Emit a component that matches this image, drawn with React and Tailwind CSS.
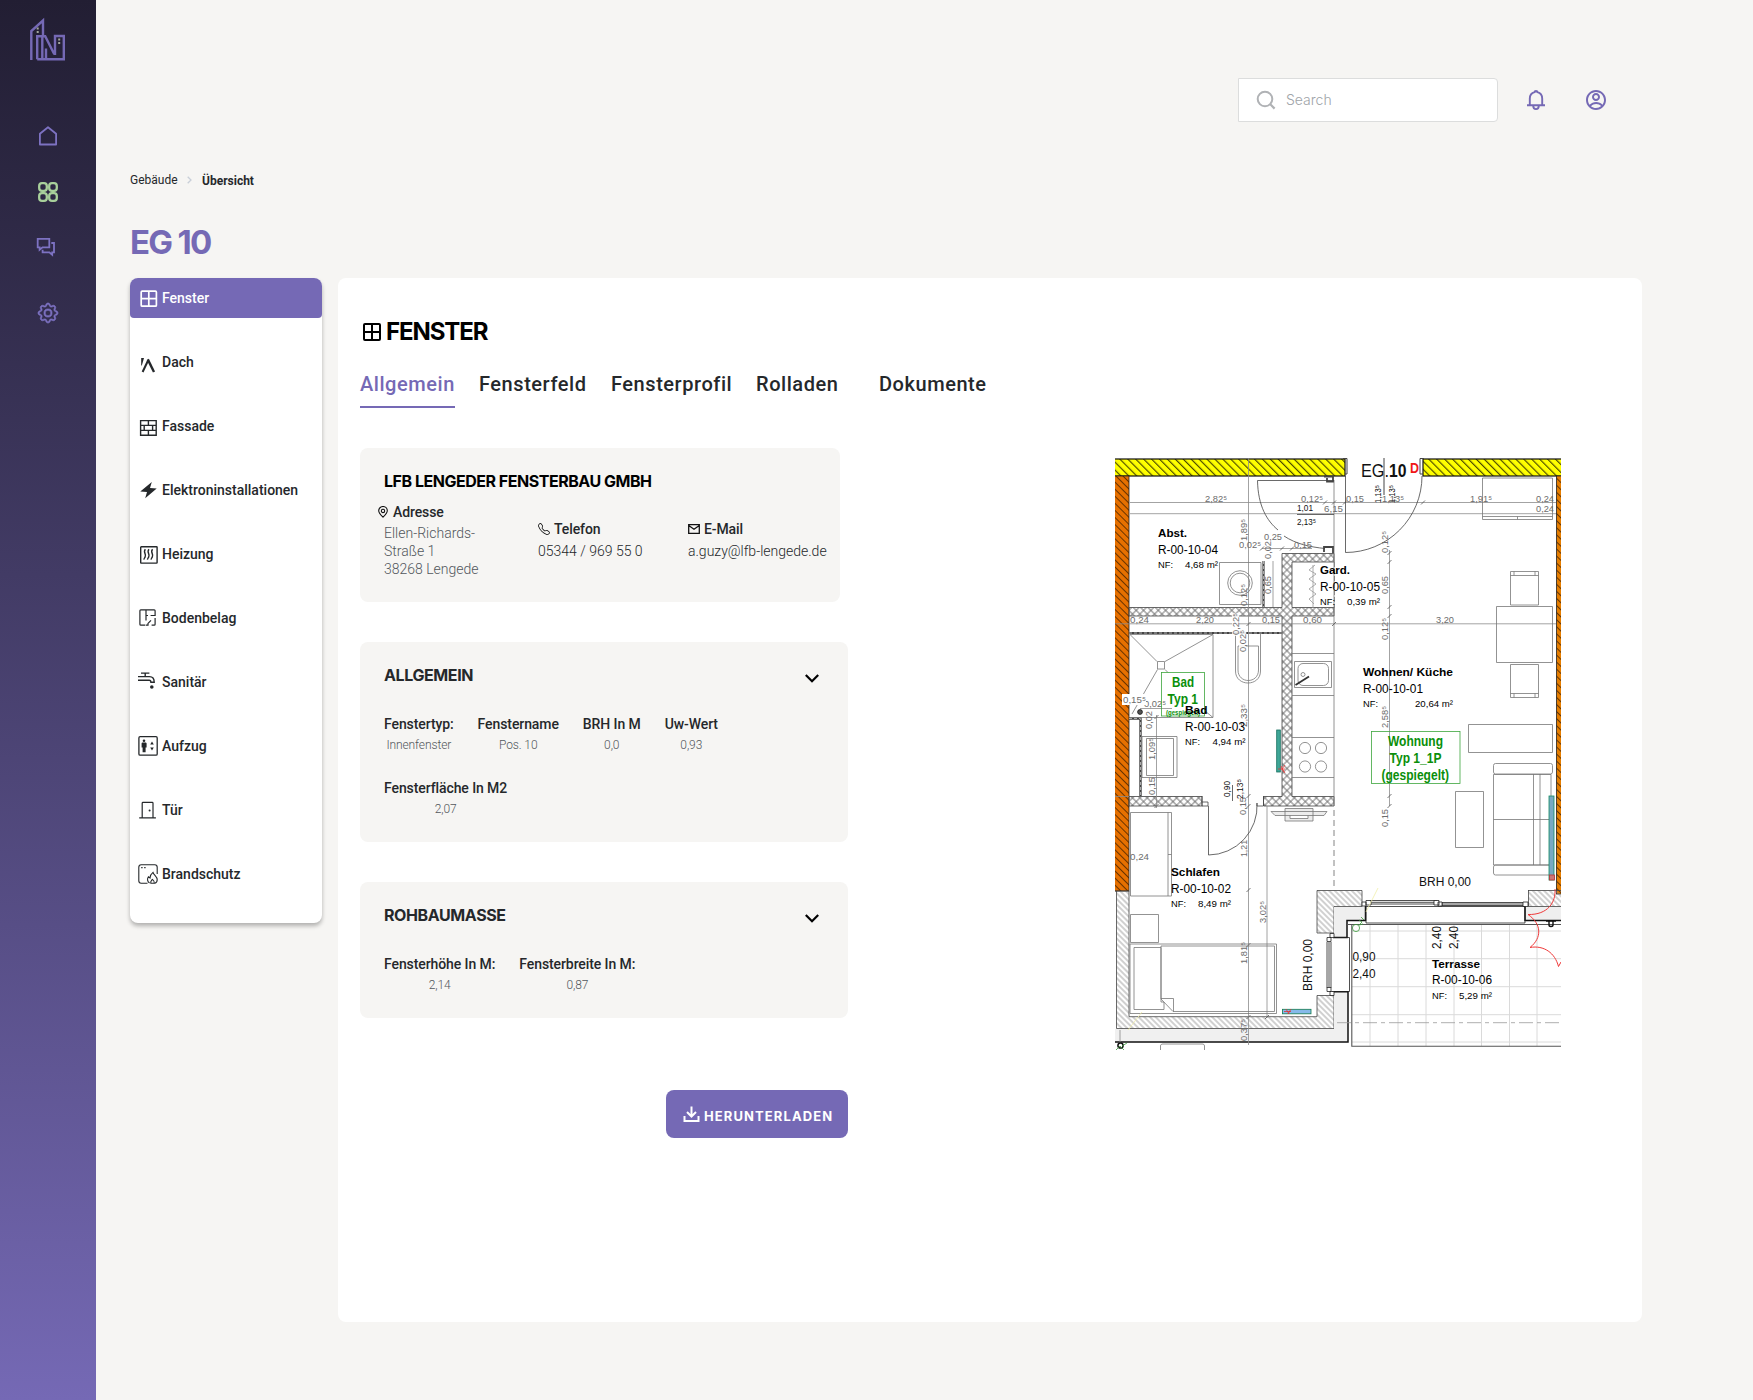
import React from "react";
import { BsGear, BsTelephone } from "react-icons/bs";
import { RiAccountCircleLine } from "react-icons/ri";

/* ---------- icons ---------- */

const Logo = () => (
  <svg width="40" height="46" viewBox="28 17 40 46" fill="none" stroke="#7569b5" strokeWidth="2.4">
    <path d="M31.3 60V31L43 20.5V36" />
    <path d="M37.2 59.2V36.2H45.2L54.3 54.2M42.3 36.2V59.2M55 55V36H63.8V59.2H37.2M46 48.5V59" />
    <path d="M37.7 27.5v2M37.7 31v2M59.2 38.5v2M59.2 42v2" stroke="#a3a89c" strokeWidth="2" />
  </svg>
);

const HomeIcon = () => (
  <svg width="24" height="24" viewBox="0 0 24 24" fill="none" stroke="#7d72c2" strokeWidth="1.8">
    <path d="M3.9 20.5V9.7L12 3.3L20.1 9.7V20.5Z" strokeLinejoin="round" />
  </svg>
);

const GridIcon = () => (
  <svg width="24" height="24" viewBox="0 0 24 24" fill="none" stroke="#a8d09b" strokeWidth="2.3">
    {[3.2, 13.2].map((x) =>
      [3.2, 13.2].map((y) => <rect key={x + "-" + y} x={x} y={y} width="7.6" height="7.6" rx="2.8" />)
    )}
  </svg>
);

const ChatIcon = () => (
  <svg width="24" height="24" viewBox="0 0 24 24" fill="none" stroke="#7d72c2" strokeWidth="1.8">
    <path d="M3.7 3.8H15.3V12.3H8.5L5.6 14.8V12.3H3.7Z" />
    <path d="M17.3 8H20V17.3H18.2V19.8L15.4 17.3H8.6V14.8" />
  </svg>
);

const BellIcon = () => (
  <svg width="20" height="22" viewBox="0 0 20 22" fill="none" stroke="#7569b5" strokeWidth="1.9">
    <path d="M1 16.3H19M3.8 16.3V9.5C3.8 6.3 5.8 4 8.6 3.2C8.6 1.6 11.4 1.6 11.4 3.2C14.2 4 16.2 6.3 16.2 9.5V16.3" />
    <path d="M7.2 16.5C7.2 21.3 12.8 21.3 12.8 16.5" />
  </svg>
);

const SearchIcon = () => (
  <svg width="20" height="20" viewBox="0 0 20 20" fill="none" stroke="#b0b2b5" strokeWidth="2">
    <circle cx="9" cy="9" r="7.3" />
    <path d="M14 14L18.6 18.6" strokeWidth="2.2" />
  </svg>
);

const MenuSvg = ({ children, w = 1.3 }) => (
  <svg width="24" height="24" viewBox="0 0 24 24" fill="none" stroke="currentColor" strokeWidth={w} className="shrink-0">
    {children}
  </svg>
);

const FensterIcon = () => (
  <MenuSvg w={1.7}>
    <rect x="5.2" y="5.2" width="15.2" height="15" rx="1" />
    <path d="M12.8 5V20M5 12.7H20.5" />
  </MenuSvg>
);

const DachIcon = () => (
  <MenuSvg>
    <path d="M5.2 8H8L5.8 15.5H5.2Z" fill="currentColor" stroke="none" />
    <path d="M6.6 22L12.3 10" strokeWidth="2" />
    <path d="M11.8 9.4L18 22" strokeWidth="2.4" />
  </MenuSvg>
);

const FassadeIcon = () => (
  <MenuSvg w={1.4}>
    <path d="M4.6 6.6H20.2V21.2H4.6ZM4.6 11.4H20.2M4.6 16.4H20.2M12.4 6.6V11.4M12.4 16.4V21.2M8.2 11.4V16.4M16.6 11.4V16.4" />
  </MenuSvg>
);

const ElektroIcon = () => (
  <MenuSvg>
    <path d="M15.8 4L4.3 13.6L11 14L9.2 20.3L20.7 10.5L14 10Z" fill="currentColor" stroke="none" />
  </MenuSvg>
);

const HeizungIcon = () => (
  <MenuSvg w={1.4}>
    <rect x="4.7" y="4.7" width="16.4" height="16.4" rx="0.6" />
    <path d="M9.4 7.2C6.6 10 10.6 12 9.2 14.6C8.6 16 8.2 16.4 7.8 17.6M13 7.2C10.2 10 14.2 12 12.8 14.6C12.2 16 11.8 16.4 11.4 17.6M16.6 7.2C13.8 10 17.8 12 16.4 14.6C15.8 16 15.4 16.4 15 17.6" />
  </MenuSvg>
);

const BodenIcon = () => (
  <MenuSvg w={1.2}>
    <path d="M9 19.2H4.8C4.2 19.2 3.9 18.9 3.9 18.3V4.8C3.9 4.2 4.2 3.9 4.8 3.9H18.2C18.8 3.9 19.1 4.2 19.1 4.8V9.5H14.6M10 4V14.5M10 9.5H12M19.1 12V18.3C19.1 18.9 18.8 19.2 18.2 19.2H15.6M9.6 19.2H12V17.4L15 14.4" />
  </MenuSvg>
);

const SanitaerIcon = () => (
  <MenuSvg w={1.4}>
    <path d="M5 3.1H13.4M9.2 3V6.4M2 6.6H13.5C16.6 6.6 18.2 8.6 18.2 12.2H14.9C14.9 10.8 14.3 10.2 13.2 10.2H2" />
    <circle cx="15.8" cy="17" r="1.8" fill="currentColor" stroke="none" />
  </MenuSvg>
);

const AufzugIcon = () => (
  <MenuSvg>
    <rect x="2.9" y="2.7" width="18.3" height="18.4" rx="1.2" />
    <g fill="currentColor" stroke="none">
      <circle cx="8" cy="6.8" r="1.3" />
      <path d="M5.6 9.4C5.6 8.7 6.2 8.5 6.8 8.5H9.2C9.9 8.5 10.6 8.7 10.6 9.4V13.4H9.6V18.2H6.6V13.4H5.6Z" />
      <path d="M14.2 10.4L16 7.4L17.8 10.4ZM14.2 13.6L16 16.6L17.8 13.6Z" />
    </g>
  </MenuSvg>
);

const TuerIcon = () => (
  <MenuSvg w={1.2}>
    <path d="M3.2 19.9H19.9M6.2 19.9V5.2C6.2 4.7 6.5 4.4 7 4.4H16.2C16.7 4.4 17 4.7 17 5.2V19.9" />
    <circle cx="13.6" cy="12.4" r="1" fill="currentColor" stroke="none" />
  </MenuSvg>
);

const BrandIcon = () => (
  <MenuSvg w={1.1}>
    <path d="M11.5 21.2H5.2C3.8 21.2 2.8 20.2 2.8 18.8V5.2C2.8 3.8 3.8 2.8 5.2 2.8H18.8C20.2 2.8 21.2 3.8 21.2 5.2V12" />
    <path d="M5.2 5.6h1.4M8.2 5.6h1.4" strokeWidth="1.3" />
    <path d="M13.6 21C11.2 19.6 11 16.8 12.4 14.8L14 16C14.2 13.6 15.4 11.6 17 10.4C17.6 13 21.4 14.6 21.2 17.8C21.2 19.4 20.2 20.8 18.8 21.3H14.8C14.2 19.4 15.4 18.6 16.4 17.4C17.6 18.4 19 19.4 18.2 21.2" />
  </MenuSvg>
);

const Chevron = () => (
  <svg width="16" height="12" viewBox="0 0 16 12" fill="none" stroke="#000" strokeWidth="2.2">
    <path d="M1.8 2L8 8.3L14.2 2" />
  </svg>
);

/* ---------- floor plan ---------- */

const DIM = "#6c6c6c";

const Label = ({ x, y, w, s = 9.5, c = DIM, b, r, children }) => (
  <text
    x={x}
    y={y}
    fontSize={s}
    fill={c}
    stroke="none"
    fontWeight={b ? 700 : 400}
    textLength={w}
    lengthAdjust="spacingAndGlyphs"
    transform={r ? `rotate(-90 ${x} ${y})` : undefined}
  >
    {children}
  </text>
);

const Room = ({ x, y, name, nameW, code, area, areaX, areaW }) => (
  <g>
    <Label x={x} y={y} w={nameW} s={11.6} c="#000" b>{name}</Label>
    <Label x={x} y={y + 16.8} w={60} s={12} c="#000">{code}</Label>
    <Label x={x} y={y + 31} w={15} s={9.4} c="#000">NF:</Label>
    <Label x={areaX} y={y + 31} w={areaW} s={9.4} c="#000">{area}</Label>
  </g>
);

const horizontalDims = [
  [1205, 501.5, 22, "2,82⁵"], [1301, 501.5, 22, "0,12⁵"], [1324, 512, 19, "6,15"], [1264, 539.5, 18, "0,25"],
  [1239, 548, 22, "0,02⁵"], [1294, 548, 18, "0,15"], [1130, 623, 19, "0,24"], [1196, 623, 18, "2,20"],
  [1262, 623, 18, "0,15"], [1303, 623, 19, "0,60"], [1346, 501.5, 18, "0,15"], [1382, 501.5, 22, "1,13⁵"],
  [1470, 501.5, 22, "1,91⁵"], [1536, 501.5, 18, "0,24"], [1536, 512, 18, "0,24"], [1436, 623, 18, "3,20"],
  [1144, 707, 22, "0,02⁵"], [1130, 859.5, 19, "0,24"],
];

const verticalDims = [
  [1247, 541, 22, "1,89⁵"], [1271, 559, 18, "0,02"], [1271, 594, 18, "0,65"], [1247, 606, 22, "0,12⁵"],
  [1239, 635, 22, "0,22⁵"], [1246, 652, 22, "0,02⁵"], [1388, 553, 22, "0,12⁵"], [1388, 594, 18, "0,65"],
  [1388, 640, 22, "0,12⁵"], [1388, 728, 22, "2,58⁵"], [1388, 827, 18, "0,15"], [1247, 727, 23, "2,33⁵"],
  [1152, 729, 18, "0,02"], [1155, 760, 22, "1,09⁵"], [1155, 795, 18, "0,15"], [1246, 815, 18, "0,15"],
  [1247, 857, 17, "1,21"], [1266, 923, 22, "3,02⁵"], [1247, 964, 22, "1,81⁵"], [1247, 1041, 22, "0,37⁵"],
];

const ticks = [
  [1248.5, 624], [1389.5, 553], [1389.5, 562], [1389.5, 607], [1389.5, 616], [1389.5, 796], [1389.5, 806],
  [1423, 502.5], [1345, 502.5], [1334, 624], [1248.5, 890], [1248.5, 945], [1248.5, 1017], [1248.5, 796],
  [1248.5, 806], [1156.5, 717], [1156.5, 806], [1282, 548.5], [1292, 548.5], [1262, 548.5], [1334, 502.5], [1267, 1017], [1325, 502.5],
];

const FloorPlan = () => (
  <svg width="446" height="592" viewBox="1115 458 446 592" fill="none" stroke="#777" strokeWidth="0.8" fontFamily="'Liberation Sans', Arial, sans-serif">
    <defs>
      <pattern id="hatch" width="5.6" height="5.6" patternUnits="userSpaceOnUse" patternTransform="rotate(-45)">
        <path d="M2.5 0V5.6" stroke="#2b2a00" strokeWidth="1" />
      </pattern>
      <pattern id="hatchOrange" width="5" height="5" patternUnits="userSpaceOnUse" patternTransform="rotate(-45)">
        <path d="M2.5 0V5" stroke="#5a2c00" strokeWidth="0.9" />
      </pattern>
      <pattern id="hatchGray" width="4" height="4" patternUnits="userSpaceOnUse" patternTransform="rotate(-45)">
        <path d="M2 0V4" stroke="#8a8a8a" strokeWidth="0.8" />
      </pattern>
      <pattern id="cross" width="5.2" height="5.2" patternUnits="userSpaceOnUse" patternTransform="rotate(-45)">
        <path d="M2.6 0V5.2M0 2.6H5.2" stroke="#6a6a6a" strokeWidth="0.9" />
      </pattern>
    </defs>

    {/* outer walls */}
    <g fill="#ffff00" stroke="none">
      <rect x="1115" y="459" width="230" height="17" />
      <rect x="1423" y="459" width="138" height="17" />
    </g>
    <g fill="url(#hatch)" stroke="#111" strokeWidth="1.2">
      <rect x="1113" y="459" width="232" height="17" />
      <rect x="1423" y="459" width="140" height="17" />
    </g>
    <rect x="1115" y="476" width="14" height="415" fill="#e67000" stroke="none" />
    <rect x="1113" y="476" width="16" height="415" fill="url(#hatchOrange)" stroke="#222" />
    <rect x="1556.5" y="476" width="5" height="418" fill="#e67e00" stroke="none" />
    <rect x="1556.5" y="476" width="7" height="418" fill="url(#hatchOrange)" stroke="#222" />
    <path d="M1115 891H1129V1016.7H1317V995.5H1334V1028.5H1116.5V891" fill="url(#hatchGray)" stroke="#444" />
    <path d="M1115 1029H1334V992H1348V1042H1115Z" fill="#f0f0f0" stroke="none" />
    <path d="M1317 890.5H1362V906.5H1334V933H1317Z" fill="url(#hatchGray)" stroke="#444" />
    <path d="M1334 907H1365V920H1347V937H1334Z" fill="#efefef" stroke="none" />
    <rect x="1528.5" y="890.5" width="34" height="16" fill="url(#hatchGray)" stroke="#444" />
    <rect x="1525" y="907" width="36" height="13" fill="#efefef" stroke="none" />
    <path d="M1365.5 906V920.5H1347V937.5H1333M1332 991.7H1348V1042H1115M1525 906V920.5H1561" stroke="#111" strokeWidth="1.5" />

    {/* inner walls */}
    <g fill="url(#cross)" stroke="#444">
      <path d="M1282 553.5H1334V562H1292V607.5H1334V616H1292V796.5H1334V806H1263.5V796.5H1282V616H1129V607.5H1282Z" />
      <rect x="1129" y="796.5" width="73" height="9.5" />
    </g>
    <path d="M1129 633H1282" stroke="#444" strokeWidth="2.2" />
    <path d="M1129 633H1282" stroke="#aaa" strokeWidth="1" strokeDasharray="3 2" />
    <path d="M1263.5 561V607" stroke="#444" strokeWidth="2.2" />
    <path d="M1263.5 561V607" stroke="#aaa" strokeWidth="1" strokeDasharray="3 2" />
    <path d="M1129 718.5H1140.5V796" stroke="#444" strokeWidth="2.4" />
    <path d="M1129 718.5H1140.5V796" stroke="#aaa" strokeWidth="1" strokeDasharray="3 2" />
    <path d="M1334 480V616M1334 616V806" />
    <path d="M1334 810V890" strokeDasharray="6 4" stroke="#666" />

    {/* dimension lines */}
    <path d="M1130 502.5H1556M1130 513.7H1556M1115 623.8H1556M1248.5 458V1045M1262 548.5H1312M1389.5 550V796M1389.5 796V806M1156.5 715V808M1267 806V1018M1273 561V607M1140 708.5H1172M1115 796.5H1129" stroke="#8b8b8b" />
    {ticks.map(([x, y], i) => (
      <path key={i} d={`M${x - 2} ${y + 2}L${x + 2} ${y - 2}`} stroke="#555" />
    ))}

    {/* doors */}
    <g stroke="#444">
      <path d="M1334 480.5H1257.5C1258 506 1267 521 1278 530M1284 536C1296 544 1310 547 1325 548.5" />
      <path d="M1324 476.5H1333V481.5H1327V478M1324 552V547H1333V553" strokeWidth="1.8" />
      <path d="M1345.5 476V552.5A76.5 76.5 0 0 0 1422 476" />
      <path d="M1343 458.5H1347V474H1345M1424 458.5H1420V474H1423M1384 458V495" strokeWidth="1" />
      <path d="M1208.5 806V855A49 49 0 0 0 1257 803M1202 796V806H1208V802H1202M1263.5 796V806M1257 803V806H1263" />
      <path d="M1297 514.5H1334M1232.5 785V801" />
    </g>

    {/* Abstellraum and bath fixtures */}
    <path d="M1219.5 562.5H1261V604.5H1219.5Z" />
    <circle cx="1240" cy="583" r="12.3" />
    <circle cx="1240" cy="583" r="9.8" />
    <path d="M1130 634.5H1213V717.5H1130M1130 634.5L1157 661.5M1213 634.5L1165 661.5M1157.5 669.5L1132 714M1165 669.5L1168 672.5M1157.5 661.5H1164.5V669H1157.5ZM1213 717.5L1205 711" />
    <path d="M1235.5 634V671C1235.5 687 1260.5 687 1260.5 671V634M1238 646H1258.5V670C1258.5 684 1238 684 1238 670Z" />
    <path d="M1142 736.5H1177V777.5H1142ZM1146.5 738.5H1173.5V775.5H1146.5Z" />
    <path d="M1315 565l-6 5 7 4-7 5 7 5-7 5 7 5-7 5 5 5M1313 565V608" stroke="#999" />
    <path d="M1334.5 562V608" strokeDasharray="5 2" />
    <circle cx="1140" cy="712" r="2.4" fill="#555" stroke="#111" />

    {/* kitchen */}
    <path d="M1292 653.5H1334M1292 695.5H1334M1292 737.5H1334M1292 777.5H1334M1294.5 661.5H1331.5V687.5H1294.5Z" />
    <rect x="1298" y="663.5" width="30.5" height="22" rx="5" />
    <circle cx="1303" cy="674.5" r="2" />
    <path d="M1295.5 685L1309 676.5" stroke="#333" strokeWidth="1.8" />
    {[[1305, 748], [1321, 748], [1305, 766.5], [1321, 766.5]].map(([x, y]) => (
      <circle key={x + "-" + y} cx={x} cy={y} r="5.6" />
    ))}
    <path d="M1271 811.5H1327L1324 815.5H1275ZM1285 808.5H1313V821H1285ZM1290 815.5V818.5H1308V815.5" fill="#ececec" />

    {/* living room furniture */}
    <path d="M1482.5 478H1552.5V519.5H1482.5ZM1482.5 516.5H1552.5M1517.5 516.5V519.5" />
    <path d="M1510.5 571.5H1538.5V605H1510.5ZM1510.5 575.5H1538.5M1514 571.5V575.5M1535 571.5V575.5" />
    <path d="M1496.5 606.5H1552.5V662.5H1496.5ZM1510.5 664.5H1538.5V697.5H1510.5ZM1510.5 693.5H1538.5M1514 693.5V697.5M1535 693.5V697.5" />
    <path d="M1468.5 724.5H1552.5V752.5H1468.5ZM1455.5 791.5H1483.5V847.5H1455.5Z" />
    <rect x="1493.5" y="763.5" width="59" height="10.5" rx="2" />
    <path d="M1493.5 774.5H1551V865H1493.5ZM1493.5 819.5H1551M1533.5 774V865M1540 774V865" />
    <rect x="1493.5" y="865" width="59" height="10" rx="2" />
    <rect x="1549" y="796" width="5" height="84" fill="#78a9c4" stroke="#138a61" />
    <rect x="1549.5" y="875" width="5" height="5" fill="#c77" stroke="#b33" />

    {/* bedroom furniture */}
    <path d="M1130.5 812.5H1171.5V896H1130.5ZM1168 812.5V896M1168 854.5H1171.5M1130.5 914.5H1158.5V942.5H1130.5Z" />
    <path d="M1130 944H1276.5V1013.5H1130ZM1134 947.5H1161V1002H1164V1009.5H1134ZM1161 946H1274.5V1011.5H1173L1161 999ZM1161 998.5H1173.5V1011.5" />

    {/* radiators */}
    <rect x="1276.7" y="730" width="3.6" height="42" fill="#3fa697" stroke="#14705f" />
    <path d="M1278 769h7M1281 766l3 6M1285 765l-3 4 3 4" stroke="#e33" />
    <rect x="1282.5" y="1009.3" width="28.5" height="4.5" fill="#86b9ea" stroke="#117a4c" />
    <path d="M1284 1011.5h7M1286 1009l3 5M1291 1009l-3 5" stroke="#d33" />

    {/* windows */}
    <g stroke="#222">
      <path d="M1327 942V988M1329 942V988M1331 942V988" />
      <path d="M1327 937.5h4v4h-4zM1327 987.5h4v4h-4zM1330 933.5h4v4h-4zM1330 991.5h4v4h-4z" fill="#fff" />
      <path d="M1334 937.5H1349.5V991.5H1334" />
      <path d="M1370 900.5H1437V904H1370ZM1370 902.3H1437M1442 902.5H1524V905.5H1442ZM1442 904H1524" />
      <path d="M1366 900.5h5v4.5h-5zM1434 900.5h5v4.5h-5zM1362 902h4v4h-4zM1438 902h4v4h-4zM1523 902h5v4.5h-5z" fill="#fff" />
      <path d="M1366 906.5H1525V923H1366Z" />
    </g>

    {/* terrace */}
    <path d="M1370 925V1046M1398 925V1046M1426 925V1046M1454 925V1046M1481.5 925V1046M1509.5 925V1046M1537 925V1046M1352 931H1561M1352 958.7H1561M1352 986.7H1561M1352 1014.7H1561M1352 1042H1561" stroke="#dadada" strokeWidth="1" />
    <path d="M1337 1022.7H1561" stroke="#999" strokeDasharray="14 4 4 4" />
    <path d="M1351.8 924.5V1046.3H1561M1347 924.5H1561" stroke="#555" strokeWidth="1.1" />
    <path d="M1546 921H1556M1549 921V925C1549 927 1553 927 1553 925V921" stroke="#111" strokeWidth="1.4" />
    <path d="M1555 889C1556 902 1548 915 1528 914.5C1542 924 1542 938 1530 947.5C1544 945 1555 953 1558.5 966.5L1561 962" stroke="#ef3a3a" strokeWidth="1" />
    <path d="M1359 920l3 2-3 3 4-1M1361 917l3 3" stroke="#3c9c3c" />
    <circle cx="1356" cy="928" r="3.6" stroke="#3c9c3c" />
    <path d="M1366 912L1378 888M1128 1030L1142 1012" stroke="#f0eeaa" />
    <path d="M1120 1030V1043" stroke="#888" />
    <circle cx="1120.5" cy="1045.5" r="2.6" stroke="#111" strokeWidth="1.5" />
    <path d="M1116 1050l4-4 4 4M1122 1046l5-3" stroke="#3c9c3c" />
    <path d="M1160.5 1050V1046C1160.5 1044.5 1161.5 1044 1163 1044H1202C1203.5 1044 1204.5 1044.5 1204.5 1046V1050" />

    {/* dimension labels */}
    {horizontalDims.map(([x, y, w, t], i) => (
      <Label key={i} x={x} y={y} w={w}>{t}</Label>
    ))}
    <path d="M1242.5 629V653M1235.5 613V636" stroke="#fff" strokeWidth="7" opacity="0.85" />
    {verticalDims.map(([x, y, w, t], i) => (
      <Label key={i} x={x} y={y} w={w} r>{t}</Label>
    ))}
    <rect x="1122" y="694" width="24" height="11" fill="#fff" stroke="none" />
    <Label x={1123} y={703} w={23}>0,15⁵</Label>

    <g>
      <Label x={1297} y={511.3} w={16} c="#111">1,01</Label>
      <Label x={1297} y={525} w={19} c="#111">2,13⁵</Label>
      <Label x={1381} y={503} w={18} c="#111" r>1,13⁵</Label>
      <Label x={1395} y={503} w={18} c="#111" r>1,13⁵</Label>
      <Label x={1230} y={797} w={16} c="#111" r>0,90</Label>
      <Label x={1243} y={799} w={20} c="#111" r>2,13⁵</Label>
    </g>

    {/* unit title */}
    <Label x={1361} y={477} w={28} s={19} c="#111">EG.</Label>
    <Label x={1389} y={477} w={17.5} s={19} c="#111" b>10</Label>
    <Label x={1410} y={473} w={9} s={15} c="#f01818" b>D</Label>

    {/* type tags */}
    <g stroke="#3da63d">
      <rect x="1161.5" y="672.5" width="43" height="43.5" />
      <rect x="1371.5" y="731.5" width="88.5" height="52" />
    </g>
    <Label x={1172} y={686.5} w={22} s={14.8} c="#0a8f0a" b>Bad</Label>
    <Label x={1167.5} y={703.5} w={30.5} s={14.8} c="#0a8f0a" b>Typ 1</Label>
    <Label x={1166} y={714.5} w={34} s={6.5} c="#0a8f0a" b>(gespiegelt)</Label>
    <Label x={1388} y={745.5} w={55} s={14.2} c="#0a8f0a" b>Wohnung</Label>
    <Label x={1389.5} y={763} w={52} s={14.2} c="#0a8f0a" b>Typ 1_1P</Label>
    <Label x={1381.5} y={780} w={67.5} s={14.2} c="#0a8f0a" b>(gespiegelt)</Label>

    {/* rooms */}
    <Room x={1158} y={537} name="Abst." nameW={29} code="R-00-10-04" area="4,68 m²" areaX={1185} areaW={33} />
    <Room x={1320} y={574} name="Gard." nameW={30} code="R-00-10-05" area="0,39 m²" areaX={1347} areaW={33} />
    <Room x={1363} y={676} name="Wohnen/ Küche" nameW={90} code="R-00-10-01" area="20,64 m²" areaX={1415} areaW={38} />
    <Room x={1185} y={714} name="Bad" nameW={22.5} code="R-00-10-03" area="4,94 m²" areaX={1212.5} areaW={33} />
    <Room x={1171} y={876} name="Schlafen" nameW={49} code="R-00-10-02" area="8,49 m²" areaX={1198} areaW={33} />
    <Room x={1432} y={967.5} name="Terrasse" nameW={48} code="R-00-10-06" area="5,29 m²" areaX={1459} areaW={33} />

    <Label x={1419} y={885.5} w={52} s={12} c="#111">BRH 0,00</Label>
    <Label x={1312} y={991} w={52} s={12} c="#111" r>BRH 0,00</Label>
    <Label x={1352.5} y={961} w={23} s={12} c="#111">0,90</Label>
    <Label x={1352.5} y={978} w={23} s={12} c="#111">2,40</Label>
    <Label x={1441} y={949} w={23} s={12} c="#111" r>2,40</Label>
    <Label x={1458} y={949} w={23} s={12} c="#111" r>2,40</Label>
  </svg>
);

/* ---------- page ---------- */

const menu = [
  ["Fenster", FensterIcon], ["Dach", DachIcon], ["Fassade", FassadeIcon], ["Elektroninstallationen", ElektroIcon],
  ["Heizung", HeizungIcon], ["Bodenbelag", BodenIcon], ["Sanitär", SanitaerIcon], ["Aufzug", AufzugIcon],
  ["Tür", TuerIcon], ["Brandschutz", BrandIcon],
];

const Field = ({ label, value }) => (
  <div className="flex flex-col items-center">
    <span className="pt-px text-[14px] leading-[18px] font-medium tracking-[-0.09px] text-[#25282b] whitespace-nowrap">{label}</span>
    <span className="mt-1 text-[12px] leading-4 font-light tracking-[-0.1px] text-[#52575c] whitespace-nowrap">{value}</span>
  </div>
);

const CardHead = ({ children }) => (
  <div className="flex h-[22px] items-center justify-between pr-1">
    <h3 className="font-['Inter'] text-[16px] leading-[22px] font-bold tracking-[-0.4px] text-[#25282b]">{children}</h3>
    <div className="pt-2"><Chevron /></div>
  </div>
);

export default function App() {
  return (
    <div className="flex h-[1400px] w-[1753px] overflow-hidden bg-[#f6f5f3] font-['Roboto',sans-serif] text-[#25282b]">
      <aside className="flex w-24 shrink-0 flex-col items-center bg-linear-to-b from-[#221e33] to-[#7569b5] pt-[17px]">
        <Logo />
        <nav className="mt-[61px] flex flex-col items-center">
          <HomeIcon />
          <div className="mt-8"><GridIcon /></div>
          <div className="mt-[31px] mr-1"><ChatIcon /></div>
          <BsGear size={20} color="#7d72c2" stroke="#7d72c2" strokeWidth="0.5" className="mt-[44px] overflow-visible" />
        </nav>
      </aside>

      <main className="flex w-[1512px] shrink-0 flex-col pt-[78px] pl-[34px]">
        <div className="flex h-11 items-center justify-end">
          <div className="flex h-11 w-[260px] items-center rounded-r-[4px] border border-[#dcdddd] bg-white pl-[17px]">
            <SearchIcon />
            <span className="ml-[10px] font-['Inter'] text-[14px] leading-5 font-light text-[#a0a4a8]">Search</span>
          </div>
          <div className="ml-7"><BellIcon /></div>
          <RiAccountCircleLine size={24} color="#7569b5" className="ml-[38px] shrink-0" />
        </div>

        <div className="mt-[50px] flex h-4 items-center text-[12px] leading-4">
          <span className="w-[57px]">Gebäude</span>
          <svg width="5" height="8" viewBox="0 0 5 8" fill="none" stroke="#c9cfd8" strokeWidth="1.3"><path d="M0.7 0.7L4 4L0.7 7.3" /></svg>
          <span className="ml-[10px] pt-px font-bold">Übersicht</span>
        </div>

        <h1 className="mt-8 h-11 font-['Inter'] text-[33px] leading-[45px] font-bold tracking-[-1.7px] text-[#7569b5]">EG 10</h1>

        <div className="mt-[14px] flex items-start gap-4">
          <ul className="flex h-[645px] w-48 shrink-0 flex-col gap-6 rounded-[8px] bg-white shadow-[0_3px_4px_rgba(0,0,0,0.28)]">
            {menu.map(([name, Icon], i) => (
              <li
                key={name}
                className={
                  "flex h-10 shrink-0 items-center pl-[6px] text-[14px] font-medium " +
                  (i === 0 ? "rounded-t-[8px] rounded-b-[4px] bg-[#7569b5] text-white" : "text-[#25282b]")
                }
              >
                <Icon />
                <span className="ml-[2px] pt-px">{name}</span>
              </li>
            ))}
          </ul>

          <section className="flex h-[1044px] w-[1304px] shrink-0 rounded-[8px] bg-white pl-[22px]">
            <div className="flex w-[755px] shrink-0 flex-col">
              <h2 className="mt-[36px] flex h-9 items-center font-['Inter'] text-[24px] font-bold tracking-[-1.1px] text-black">
                <svg width="24" height="24" viewBox="0 0 24 24" fill="none" stroke="#000" strokeWidth="2">
                  <rect x="4" y="4" width="16" height="16" rx="1" />
                  <path d="M12 4V20M4 12H20" />
                </svg>
                <span className="ml-[2px]">FENSTER</span>
              </h2>

              <div className="mt-[20px] flex h-[38px] text-[20px] leading-[29px] font-medium tracking-[0.55px] whitespace-nowrap">
                <span className="w-[95px] border-b-2 border-[#7569b5] text-[#7569b5]">Allgemein</span>
                <span className="ml-6 w-[108px]">Fensterfeld</span>
                <span className="ml-6 w-[121px]">Fensterprofil</span>
                <span className="ml-6 w-[83px]">Rolladen</span>
                <span className="ml-10">Dokumente</span>
              </div>

              <div className="mt-[40px] h-[154px] w-[480px] rounded-[8px] bg-[#f6f5f3] pt-[22px] pl-6">
                <h3 className="font-['Inter'] text-[16px] leading-[22px] font-bold tracking-[-0.48px] text-black">LFB LENGEDER FENSTERBAU GMBH</h3>
                <div className="flex text-[14px] leading-[18px]">
                  <div className="w-[154px] pt-[11px]">
                    <div className="-ml-[7px] flex items-center gap-1 font-medium tracking-[-0.1px]">
                      <svg width="12" height="12" viewBox="0 0 12 12" fill="none" stroke="#111" strokeWidth="1.1">
                        <path d="M6 11.2C3.5 8.8 1.7 7 1.7 4.8A4.3 4.3 0 0 1 10.3 4.8C10.3 7 8.5 8.8 6 11.2Z" />
                        <circle cx="6" cy="4.9" r="1.7" />
                      </svg>
                      Adresse
                    </div>
                    <p className="mt-[3px] font-light text-[#52575c]">Ellen-Richards-<br />Straße 1<br />38268 Lengede</p>
                  </div>
                  <div className="w-[150px] pt-7">
                    <div className="flex items-center gap-1 font-medium tracking-[-0.1px]"><BsTelephone size={12} color="#111" />Telefon</div>
                    <p className="mt-1 font-light whitespace-nowrap">05344 / 969 55 0</p>
                  </div>
                  <div className="pt-7">
                    <div className="flex items-center gap-1 font-medium tracking-[-0.1px]">
                      <svg width="12" height="12" viewBox="0 0 12 12" fill="none" stroke="#111" strokeWidth="1.3">
                        <path d="M0.7 1.6H11.3V10.4H0.7ZM0.7 2.5L6 6.2L11.3 2.5" />
                      </svg>
                      E-Mail
                    </div>
                    <p className="mt-1 font-light whitespace-nowrap">a.guzy@lfb-lengede.de</p>
                  </div>
                </div>
              </div>

              <div className="mt-10 h-[200px] w-[488px] rounded-[8px] bg-[#f6f5f3] px-6 pt-[22px]">
                <CardHead>ALLGEMEIN</CardHead>
                <div className="mt-[28px] flex flex-wrap gap-x-6 gap-y-[25px]">
                  <Field label="Fenstertyp:" value="Innenfenster" />
                  <Field label="Fenstername" value="Pos. 10" />
                  <Field label="BRH In M" value="0,0" />
                  <Field label="Uw-Wert" value="0,93" />
                  <Field label="Fensterfläche In M2" value="2,07" />
                </div>
              </div>

              <div className="mt-10 h-[136px] w-[488px] rounded-[8px] bg-[#f6f5f3] px-6 pt-[22px]">
                <CardHead>ROHBAUMASSE</CardHead>
                <div className="mt-[28px] flex gap-x-6">
                  <Field label="Fensterhöhe In M:" value="2,14" />
                  <Field label="Fensterbreite In M:" value="0,87" />
                </div>
              </div>

              <button className="mt-[72px] ml-[306px] flex h-12 w-[182px] items-center rounded-[8px] bg-[#7569b5] pl-[17px] text-white">
                <svg width="17" height="17" viewBox="0 0 17 17" fill="none" stroke="#fff" strokeWidth="2">
                  <path d="M8.5 0.5V10M4 6L8.5 10.5L13 6M1.5 10V15H15.5V10" />
                </svg>
                <span className="ml-1 pt-1 font-['Inter'] text-[13px] leading-4 font-bold tracking-[1.1px]">HERUNTERLADEN</span>
              </button>
            </div>

            <div className="mt-[180px] h-[592px] w-[446px]"><FloorPlan /></div>
          </section>
        </div>
      </main>
    </div>
  );
}
